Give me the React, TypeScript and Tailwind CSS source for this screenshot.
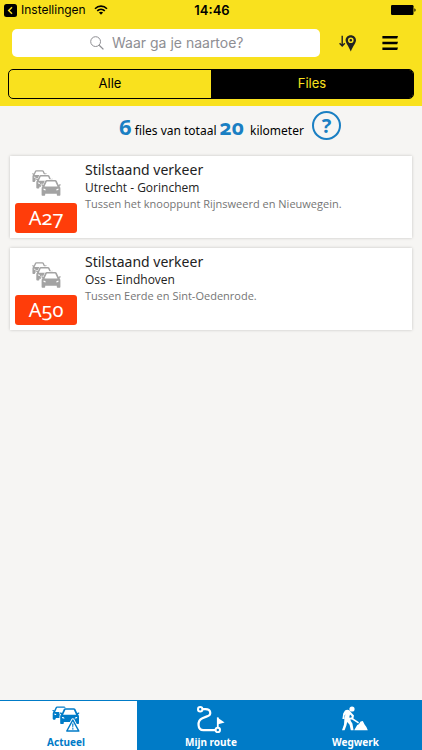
import React, { useState } from 'react';

interface Jam {
  road: string;
  title: string;
  route: string;
  detail: string;
}

const jams: Jam[] = [
  {
    road: 'A27',
    title: 'Stilstaand verkeer',
    route: 'Utrecht - Gorinchem',
    detail: 'Tussen het knooppunt Rijnsweerd en Nieuwegein.',
  },
  {
    road: 'A50',
    title: 'Stilstaand verkeer',
    route: 'Oss - Eindhoven',
    detail: 'Tussen Eerde en Sint-Oedenrode.',
  },
];

// The halo is the silhouette in the background colour, it cuts the car free from the one behind it
const Car: React.FC<{ halo: string }> = ({ halo }) => (
  <>
    <path
      d="M4.6 0.9C4.9 0.3 5.5 0 6.2 0H13.8C14.5 0 15.1 0.3 15.4 0.9L17.2 4.8 19.6 4.6 19 6.2 19.4 8.4V15.6H15.4V13.6H4.6V15.6H0.6V8.4L1 6.2 0.4 4.6 2.8 4.8Z"
      fill={halo}
      stroke={halo}
      strokeWidth="1.6"
      strokeLinejoin="round"
    />
    <path
      fillRule="evenodd"
      d="M4.2 0.9C4.5 0.3 5.1 0 5.9 0H14.1C14.9 0 15.5 0.3 15.8 0.9L17.6 4.9C18.1 4.2 19.2 4.1 19.7 4.6 19.9 5.3 19.2 5.9 18.3 6.1 19.1 6.8 19.4 7.6 19.4 8.6V14.8C19.4 15.4 19 15.8 18.4 15.8H16.8C16.2 15.8 15.8 15.4 15.8 14.8V13.8H4.2V14.8C4.2 15.4 3.8 15.8 3.2 15.8H1.6C1 15.8 0.6 15.4 0.6 14.8V8.6C0.6 7.6 0.9 6.8 1.7 6.1 0.8 5.9 0.1 5.3 0.3 4.6 0.8 4.1 1.9 4.2 2.4 4.9ZM6.2 1.6C5.9 1.6 5.7 1.7 5.6 2L3.5 6.6H16.5L14.4 2C14.3 1.7 14.1 1.6 13.8 1.6ZM2.3 8.8C2.4 9.9 3.4 10.5 5 10.3 4.9 9.3 3.9 8.7 2.3 8.8ZM17.7 8.8C16.1 8.7 15.1 9.3 15 10.3 16.6 10.5 17.6 9.9 17.7 8.8Z"
    />
  </>
);

const QueueIcon: React.FC = () => (
  <svg viewBox="0 0 29 26" className="h-[26px] w-[29px] fill-current text-[#a3a3a3]" aria-hidden="true">
    <g transform="translate(0 .2) scale(.74)"><Car halo="#fff" /></g>
    <g transform="translate(3.8 5) scale(.86)"><Car halo="#fff" /></g>
    <g transform="translate(9 10)"><Car halo="#fff" /></g>
  </svg>
);

const JamCard: React.FC<{ jam: Jam }> = ({ jam }) => (
  <article className="flex h-[82px] bg-white pl-[5px] shadow-[0_0_3px_rgba(0,0,0,0.2)]">
    <div className="flex w-[62px] shrink-0 flex-col items-center pt-[14px]">
      <QueueIcon />
      <span className="mt-[7px] flex h-[30px] w-full items-center justify-center rounded-[3px] bg-[#ff3d0a] pb-px font-['Noto_Sans',sans-serif] text-[20px] leading-6 text-white oldstyle-nums">
        {jam.road}
      </span>
    </div>
    <div className="min-w-0 flex-1 pt-1 pl-2 font-['Open_Sans',sans-serif]">
      <h2 className="font-['Noto_Sans',sans-serif] text-[14px] leading-5 text-[#222]">{jam.title}</h2>
      <p className="text-[12px] leading-4 text-[#222]">{jam.route}</p>
      <p className="text-[11px] leading-4 text-[#757575]">{jam.detail}</p>
    </div>
  </article>
);

const StatusBar: React.FC = () => (
  <div className="grid h-5 grid-cols-3 items-center pr-[6px] pl-1 font-['Inter',sans-serif] text-[12px] text-black">
    <div className="flex items-center gap-1 whitespace-nowrap">
      <svg viewBox="0 0 13 13" className="size-[13px] shrink-0" aria-hidden="true">
        <rect width="13" height="13" rx="2.5" />
        <path d="M8 3.2L4.7 6.5 8 9.8" fill="none" stroke="#f9e11e" strokeWidth="1.5" />
      </svg>
      <span>Instellingen</span>
      <svg viewBox="0 0 14 10" className="ml-1 h-[10px] w-[14px] shrink-0" aria-hidden="true">
        <path d="M1 3.7C4.4 .3 9.6 .3 13 3.7M3.2 5.9C5.4 3.8 8.6 3.8 10.8 5.9" fill="none" stroke="#000" strokeWidth="1.6" />
        <path d="M4.9 7.5C6.1 6.4 7.9 6.4 9.1 7.5L7 9.7Z" />
      </svg>
    </div>
    <span className="pt-px pl-1 text-center text-[13px] font-semibold">14:46</span>
    <svg viewBox="0 0 25 10" className="h-[10px] w-[25px] justify-self-end" aria-hidden="true">
      <rect width="22.5" height="10" rx="1.2" />
      <path d="M23.4 3.2C25 3.6 25 6.4 23.4 6.8Z" />
    </svg>
  </div>
);

const ActueelIcon: React.FC<{ active: boolean }> = ({ active }) => {
  const back = active ? '#fff' : '#007bc7';
  return (
    <svg viewBox="0 0 28 26" className="h-[26px] w-7 fill-current" aria-hidden="true">
      <g transform="translate(.2 .4) scale(.84)"><Car halo={back} /></g>
      <g transform="translate(7.6 2.2)"><Car halo={back} /></g>
      <path d="M20.8 13.8L26.8 25H14.8Z" fill={back} stroke={back} strokeWidth="3" strokeLinejoin="round" />
      <path d="M20.8 14L26.8 25H14.8Z" fill={back} stroke="currentColor" strokeWidth="1.5" strokeLinejoin="round" />
      <path d="M20.1 17.4H21.5L21.2 21.4H20.4ZM20.1 22.2H21.5V23.5H20.1Z" />
    </svg>
  );
};

const RouteIcon: React.FC = () => (
  <svg viewBox="0 0 28 27" className="h-[27px] w-7" fill="none" stroke="currentColor" strokeWidth="2.2" aria-hidden="true">
    <circle cx="3.2" cy="3.2" r="2.2" strokeWidth="2" />
    <path d="M5.4 3.2H8.6C14 3.2 15 9 10 10.4L5.4 12.2C-.2 14.6 .4 24.2 6.4 24.2H18.6" />
    <circle cx="20.8" cy="24" r="2.2" strokeWidth="2" />
    <path d="M20.8 22V11.4" strokeWidth="1.8" />
    <path d="M20.4 11.4L27.6 16.4 20.4 18.4Z" fill="currentColor" stroke="none" />
  </svg>
);

const WorkIcon: React.FC = () => (
  <svg viewBox="0 0 26 25" className="h-[25px] w-[26px] fill-current" aria-hidden="true">
    <circle cx="10" cy="3" r="2.6" />
    <path
      fillRule="evenodd"
      d="M3 4.4C4.2 3.4 6.4 3.4 7.6 4.4L9.6 7 12 9.4 11.4 12.4 17 16.2 16.2 17.6 10.4 13.8 8.4 13.2 8.8 15 10.4 17.6 11.6 24.2H8.8L7.6 18.8 5.2 16 4.4 19.6 2.6 24.2H0L2 18.6 2.4 12.6 3.4 8.2 2.6 9.4 2.2 13H.4L1.2 7.6ZM8 8.6L7.2 11.4 9.2 11.8 9.8 10.2Z"
    />
    <path d="M12.2 24.2L15.2 19 16.8 18.2 18.6 15.4 20.8 15 22.6 18.4 24.4 21 25.8 24.2Z" />
  </svg>
);

export default function App() {
  const [filter, setFilter] = useState('Files');
  const [tab, setTab] = useState('Actueel');

  const tabs = [
    { label: 'Actueel', icon: <ActueelIcon active={tab === 'Actueel'} />, pad: 'pr-[5px]' },
    { label: 'Mijn route', icon: <RouteIcon />, pad: '' },
    { label: 'Wegwerk', icon: <WorkIcon />, pad: 'pl-1' },
  ];

  return (
    <div className="flex min-h-screen flex-col bg-[#f6f5f3]">
      <header className="bg-[#f9e11e] pb-[7px]">
        <StatusBar />

        <div className="flex items-center pt-[9px] pr-6 pl-3">
          <label className="flex h-7 min-w-0 flex-1 items-center justify-center gap-2 rounded-[5px] bg-white pl-1">
            <svg viewBox="0 0 14 14" className="size-[14px] shrink-0" fill="none" stroke="#8e8e93" aria-hidden="true">
              <circle cx="5.6" cy="5.6" r="4.9" />
              <path d="M9.2 9.2L13.4 13.4" strokeWidth="1.3" />
            </svg>
            <input
              type="text"
              aria-label="Zoeken"
              placeholder="Waar ga je naartoe?"
              className="w-[134px] font-['Inter',sans-serif] text-[14px] leading-5 text-black outline-none placeholder:text-[#8e8e93]"
            />
          </label>
          <button aria-label="Locatie" className="ml-[19px] flex w-[17px] justify-center">
            <svg viewBox="0 0 17 17" className="size-[17px]" aria-hidden="true">
              <path d="M3.2 .8V10.6M.6 8.2L3.2 11 5.8 8.2" fill="none" stroke="#222" strokeWidth="1.4" />
              <path d="M11.8 .3C14.8 .3 17 2.5 17 5.3 17 8 14.2 10.6 11.8 16.6 9.4 10.6 6.6 8 6.6 5.3 6.6 2.5 8.8 .3 11.8 .3ZM11.8 2.5A2.8 2.8 0 1 0 11.8 8.1 2.8 2.8 0 1 0 11.8 2.5ZM11.8 4A1.3 1.3 0 1 1 11.8 6.6 1.3 1.3 0 1 1 11.8 4Z" fill="#222" fillRule="evenodd" />
            </svg>
          </button>
          <button aria-label="Menu" className="ml-[26px] flex w-4 justify-center">
            <svg viewBox="0 0 16 16" className="size-4" aria-hidden="true">
              <path d="M.4 1H16L15.2 3.4H.4ZM.4 6.8H16L15.2 9.2H.4ZM.4 12.6H16L15.2 15H.4Z" />
            </svg>
          </button>
        </div>

        <div className="mx-2 mt-3 grid h-[30px] grid-cols-2 overflow-hidden rounded-[5px] border border-black font-['Inter',sans-serif] text-[13px]">
          {['Alle', 'Files'].map((name) => (
            <button
              key={name}
              aria-pressed={filter === name}
              onClick={() => setFilter(name)}
              className={filter === name ? 'bg-black text-[#f9e11e]' : 'text-black'}
            >
              {name}
            </button>
          ))}
        </div>
      </header>

      <main className="flex-1 px-[10px]">
        <div className="flex h-[50px] items-start justify-center pt-[5px] pl-[38px] font-['Noto_Sans',sans-serif] text-[12px] text-black">
          <p className="flex h-[30px] items-baseline gap-[3px] whitespace-nowrap">
            <strong className="text-[22px] leading-[30px] text-[#1a7fc3]">6</strong>
            <span>files van totaal</span>
            <strong className="text-[21px] leading-[30px] text-[#1a7fc3] oldstyle-nums">20</strong>
            <span className="ml-[3px]">kilometer</span>
          </p>
          <button
            aria-label="Uitleg"
            className="ml-2 flex size-[29px] items-center justify-center rounded-full border-2 border-[#1a7fc3] text-[20px] leading-6 font-bold text-[#1a7fc3]"
          >
            ?
          </button>
        </div>

        <div className="flex flex-col gap-[10px]">
          {jams.map((jam) => (
            <JamCard key={jam.road} jam={jam} />
          ))}
        </div>
      </main>

      <nav className="sticky bottom-0 grid h-[50px] grid-cols-[1fr_1.08fr_1fr] border-t border-[#007bc7] bg-[#007bc7]">
        {tabs.map((t) => (
          <button
            key={t.label}
            onClick={() => setTab(t.label)}
            className={`flex flex-col items-center justify-between pt-[5px] pb-px font-['Noto_Sans',sans-serif] text-[10px] leading-[14px] font-bold ${t.pad} ${
              tab === t.label ? 'bg-white text-[#007bc7]' : 'text-white'
            }`}
          >
            {t.icon}
            <span>{t.label}</span>
          </button>
        ))}
      </nav>
    </div>
  );
}
